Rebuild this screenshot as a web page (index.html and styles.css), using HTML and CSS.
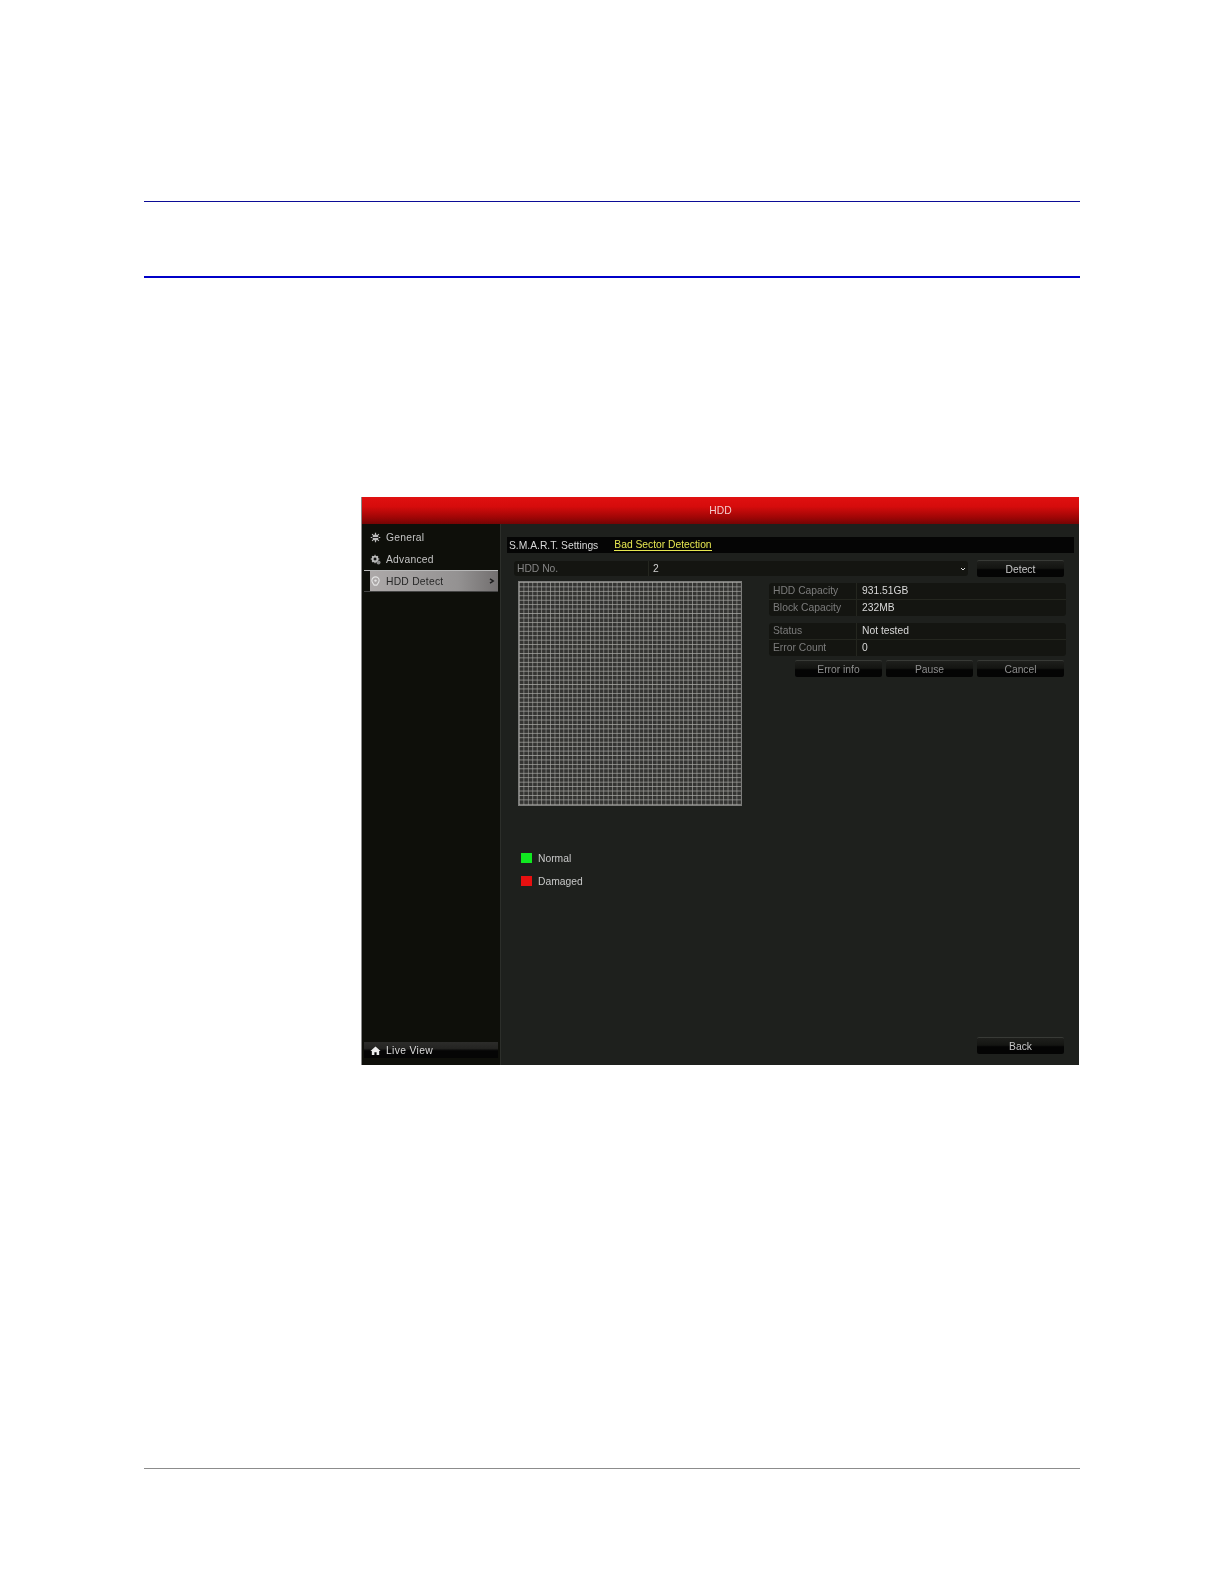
FILE: index.html
```html
<!DOCTYPE html>
<html lang="en">
<head>
  <meta charset="UTF-8" />
  <title>HDD</title>
  <link rel="stylesheet" href="styles.css">
</head>
<body>

  <div class="rule rule-top"></div>
  <div class="rule rule-second"></div>

  <div class="screen">
    <div class="titlebar">HDD</div>
    <div class="screen-body">

      <nav class="sidebar">
        <ul class="menu">
          <li>
            <svg class="menu-icon" viewBox="0 0 12 12"><circle cx="6" cy="6" r="3.200" fill="#bdbdbd"/><path d="M6 .8v10.400M.8 6h10.400M2.300 2.300l7.400 7.400M9.700 2.300l-7.400 7.400" stroke="#bdbdbd" stroke-width="1.300"/><path d="M2.400 6h7.200" stroke="#111" stroke-width="1"/></svg>
            General
          </li>
          <li>
            <svg class="menu-icon" viewBox="0 0 12 12"><circle cx="5.500" cy="5.500" r="3" fill="none" stroke="#bdbdbd" stroke-width="1.400"/><path d="M5.500 .8v9.400M.8 5.500h9.400M2.200 2.200l6.600 6.600M8.800 2.200l-6.600 6.600" stroke="#bdbdbd" stroke-width="1.100"/><circle cx="5.500" cy="5.500" r="1.300" fill="#111"/><circle cx="9.300" cy="9.300" r="2.200" fill="#8c8c8c"/></svg>
            Advanced
          </li>
          <li class="active">
            <svg class="menu-icon" viewBox="0 0 12 12"><path d="M6 1a4 4 0 0 1 4 4c0 2.400-2 3.600-2.600 5H4.600C4 8.600 2 7.400 2 5a4 4 0 0 1 4-4z" fill="none" stroke="#e4e4e4" stroke-width="1.200"/><circle cx="6" cy="5" r="1.300" fill="#e4e4e4"/></svg>
            HDD Detect
            <svg class="menu-arrow" viewBox="0 0 6 6"><path d="M1 .8L4.200 3 1 5.200" fill="none" stroke="#1c1c1c" stroke-width="1.500"/></svg>
          </li>
        </ul>
        <div class="live-view">
          <svg class="menu-icon" viewBox="0 0 12 12"><path d="M6 1.500L11.500 6.500H10V11H7.200V8H4.800V11H2V6.500H.5z" fill="#eee"/></svg>
          Live View
        </div>
      </nav>

      <section class="content">
        <div class="tabs">
          <span class="tab">S.M.A.R.T. Settings</span>
          <span class="tab tab-active">Bad Sector Detection</span>
        </div>

        <div class="hdd-row">
          <div class="select-box">
            <span class="select-label">HDD No.</span>
            <span class="select-value">2</span>
            <svg class="select-arrow" viewBox="0 0 6 4"><path d="M1 1l2 2 2-2" fill="none" stroke="#ddd" stroke-width="1"/></svg>
          </div>
          <button class="btn btn-bright">Detect</button>
        </div>

        <div class="detect-area">
          <div class="sector-grid"></div>
          <div class="info">
            <div class="info-group">
              <div class="info-row"><span class="info-label">HDD Capacity</span><span class="info-value">931.51GB</span></div>
              <div class="info-row"><span class="info-label">Block Capacity</span><span class="info-value">232MB</span></div>
            </div>
            <div class="info-group">
              <div class="info-row"><span class="info-label">Status</span><span class="info-value">Not tested</span></div>
              <div class="info-row"><span class="info-label">Error Count</span><span class="info-value">0</span></div>
            </div>
            <div class="info-buttons">
              <button class="btn">Error info</button>
              <button class="btn">Pause</button>
              <button class="btn">Cancel</button>
            </div>
          </div>
        </div>

        <div class="legend">
          <div class="legend-item"><span class="swatch swatch-green"></span>Normal</div>
          <div class="legend-item"><span class="swatch swatch-red"></span>Damaged</div>
        </div>

        <div class="back-row">
          <button class="btn btn-bright">Back</button>
        </div>
      </section>

    </div>
  </div>

  <div class="rule-bottom"></div>

</body>
</html>
```

FILE: styles.css
```css
* {
  margin: 0;
  padding: 0;
  box-sizing: border-box;
}

body {
  background: #fff;
  font-family: "Liberation Sans", Arial, sans-serif;
  padding-top: 201px;
  height: 1584px;
  overflow: hidden;
}

.rule {
  margin: 0 144px;
  background: #0000c8;
}

.rule-top {
  height: 1px;
  background: #0c0c96;
}

.rule-second {
  height: 2px;
  margin-top: 74px;
}

.rule-bottom {
  height: 1px;
  margin: 403px 144px 0;
  background: #8c8c8c;
}

/* DVR screen */
.screen {
  width: 718px;
  height: 568px;
  margin: 219px 0 0 361px;
  background: #1e201d;
  border-left: 1px solid #8a8a8a;
  color: #d0d0d0;
  font-size: 10.3px;
  display: flex;
  flex-direction: column;
  filter: blur(0.4px);
}

.titlebar {
  height: 27px;
  flex-shrink: 0;
  background: linear-gradient(#e01010 0%, #d60c0c 35%, #a00606 75%, #740404 100%);
  color: #f4cccc;
  text-align: center;
  line-height: 27px;
}

.screen-body {
  flex: 1;
  display: flex;
  min-height: 0;
}

.sidebar {
  width: 139px;
  flex-shrink: 0;
  background: #0e0f0a;
  border-right: 1px solid #2c2e2a;
  padding: 2px 2px 7px 2px;
  display: flex;
  flex-direction: column;
  justify-content: space-between;
}

.menu {
  list-style: none;
}

.menu li {
  height: 22px;
  display: flex;
  align-items: center;
  padding-left: 6px;
  letter-spacing: 0.25px;
  color: #c4c4c4;
  position: relative;
}

.menu li.active {
  background: linear-gradient(90deg, #aeaaaa, #949292 70%, #726f6f);
  background-clip: content-box;
  color: #262626;
  border-top: 1px solid #b8b8b8;
  border-bottom: 1px solid #444;
}

.menu-icon {
  width: 11px;
  height: 11px;
  margin-right: 5px;
  flex-shrink: 0;
}

.menu-arrow {
  width: 6px;
  height: 6px;
  position: absolute;
  right: 3px;
  top: 7px;
}

.live-view {
  height: 16px;
  display: flex;
  align-items: center;
  padding-left: 6px;
  letter-spacing: 0.35px;
  color: #dcdcdc;
  background: linear-gradient(#2c2c2a 0%, #242422 40%, #050505 55%, #050505 100%);
}

.content {
  flex: 1;
  min-width: 0;
  margin: 0 5px 0 6px;
  padding-top: 13px;
  display: flex;
  flex-direction: column;
}

.tabs {
  height: 16px;
  background: #050505;
  padding-left: 2px;
  display: flex;
  align-items: center;
  gap: 16px;
  flex-shrink: 0;
}

.tab {
  color: #d8d8d8;
}

.tab-active {
  color: #e6e650;
  border-bottom: 1px solid #e6e650;
  line-height: 11px;
}

.hdd-row {
  margin: 7px 0 0 7px;
  display: flex;
  align-items: flex-start;
  gap: 9px;
}

.select-box {
  width: 454px;
  height: 15px;
  margin-top: 1px;
  background: #141511;
  border-radius: 3px;
  display: flex;
  align-items: center;
  position: relative;
}

.select-label {
  width: 135px;
  padding-left: 3px;
  color: #858585;
  border-right: 1px solid #24261f;
  line-height: 15px;
}

.select-value {
  padding-left: 4px;
  color: #d0d0d0;
}

.select-arrow {
  width: 6px;
  height: 4px;
  position: absolute;
  right: 2px;
  top: 6px;
}

.btn {
  width: 87px;
  height: 17px;
  border: 0;
  border-top: 1px solid #383a36;
  border-radius: 2px;
  font-family: inherit;
  font-size: 10.3px;
  color: #8e8e8e;
  background: linear-gradient(#1e1f1c 0%, #141512 45%, #040404 55%, #040404 100%);
}

.btn-bright {
  color: #c8c8c8;
}

.detect-area {
  margin: 4px 8px 0 11px;
  display: flex;
  justify-content: space-between;
  align-items: flex-start;
}

.sector-grid {
  width: 224px;
  height: 225px;
  background-color: #343432;
  border: 1px solid #7c7c7a;
  background-image:
    linear-gradient(90deg, rgba(170, 170, 166, 0.65) 1px, transparent 1px),
    linear-gradient(rgba(180, 180, 176, 0.7) 1px, transparent 1px);
  background-size: 4.45px 4.45px;
}

.info {
  width: 297px;
  padding-top: 2px;
}

.info-group {
  background: #141511;
  border-radius: 3px;
  margin-bottom: 7px;
}

.info-row {
  height: 16.5px;
  display: flex;
  align-items: center;
  border-bottom: 1px solid #24261f;
}

.info-row:last-child {
  border-bottom: 0;
}

.info-label {
  width: 88px;
  padding-left: 4px;
  line-height: 16px;
  color: #7c7c7c;
  border-right: 1px solid #24261f;
}

.info-value {
  padding-left: 5px;
  color: #d8d8d8;
}

.info-buttons {
  display: flex;
  justify-content: flex-end;
  gap: 4px;
  margin: -3px 2px 0 0;
}

.legend {
  margin: 47px 0 0 14px;
  display: flex;
  flex-direction: column;
  gap: 13px;
}

.legend-item {
  height: 10px;
  display: flex;
  align-items: center;
  color: #c8c8c8;
}

.swatch {
  width: 11px;
  height: 10px;
  margin-right: 6px;
}

.swatch-green {
  background: #10e820;
}

.swatch-red {
  background: #e81010;
}

.back-row {
  margin: auto 10px 11px 0;
  display: flex;
  justify-content: flex-end;
}
```
